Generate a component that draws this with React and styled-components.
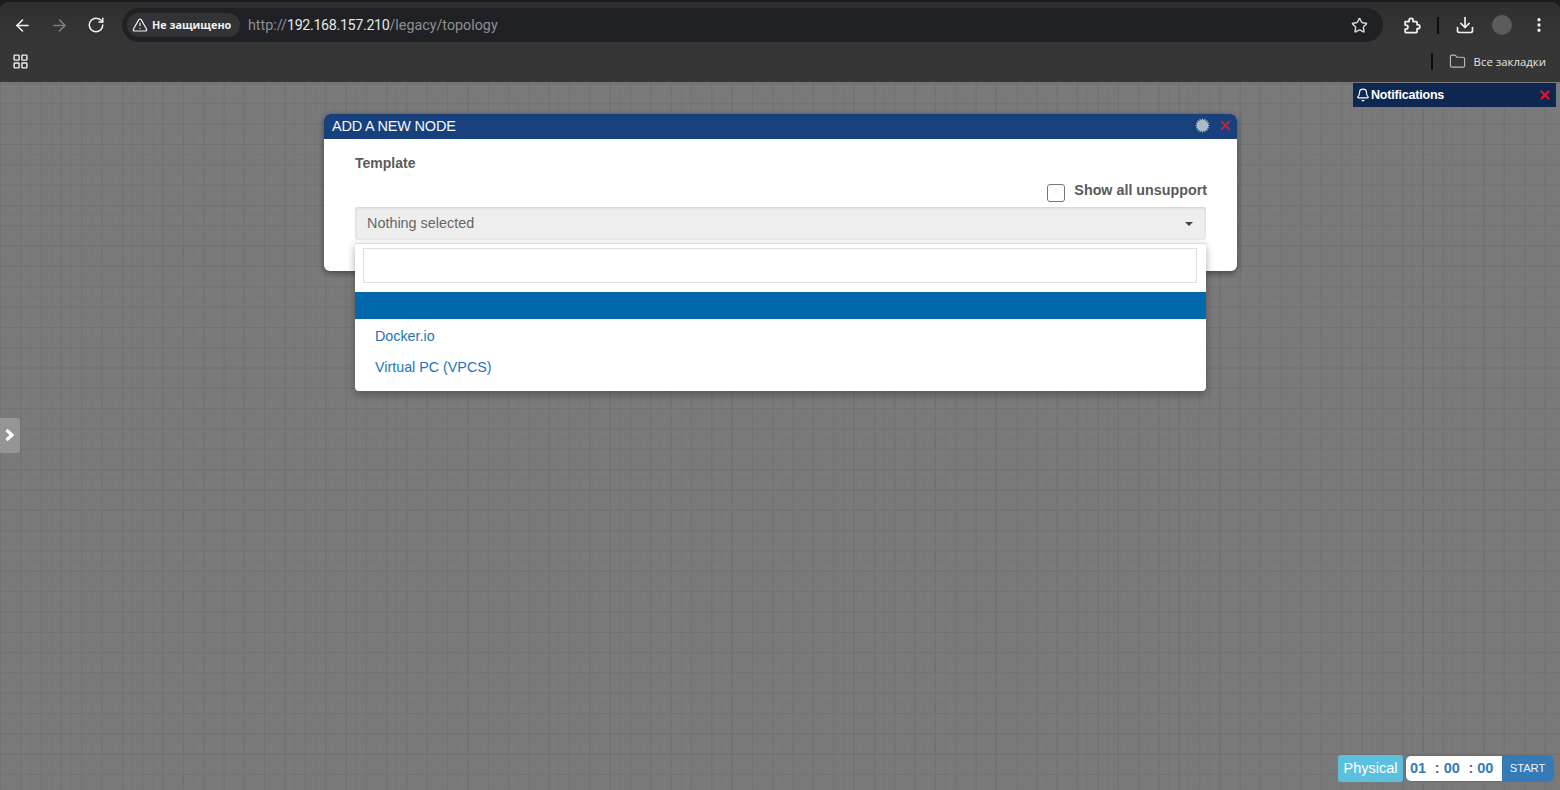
import React from 'react';
import styled, { createGlobalStyle } from 'styled-components';
import { ArrowLeft, ArrowRight, RotateCw, TriangleAlert, Star, Download, EllipsisVertical, LayoutGrid, Folder, Bell, X } from 'lucide-react';

const GlobalStyle = createGlobalStyle`
  html, body { margin: 0; padding: 0; height: 100%; overflow: hidden; }
  body { font-family: "Liberation Sans", Arial, sans-serif; background: #7a7a7a; }
  #root { height: 100%; }
`

const Page = styled.div`
  width: 1560px;
  height: 790px;
  display: flex;
  flex-direction: column;
  overflow: hidden;
  background: #1b1b1b;
`

const TabStrip = styled.div`
  height: 2px;
  background: #1b1b1b;
  flex: none;
`

const Toolbar = styled.div`
  height: 40px;
  flex: none;
  display: flex;
  align-items: center;
  padding: 6px 0 0 13px;
  box-sizing: border-box;
  background: linear-gradient(#2f2f2f, #363636);
  border-radius: 8px 8px 0 0;
  color: #f1f1f1;
`

const NavButton = styled.span`
  width: 19px;
  height: 19px;
  display: flex;
  margin-right: ${p => p.$gap ?? 18}px;
  color: ${p => p.$muted ? '#7d7d7d' : '#f1f1f1'};
`

const Omnibox = styled.div`
  width: 1261px;
  height: 34px;
  margin-left: 16px;
  border-radius: 17px;
  background: #202124;
  display: flex;
  align-items: center;
  padding: 0 15px 0 5px;
  box-sizing: border-box;
`

const SecurityChip = styled.div`
  height: 24px;
  width: 113px;
  flex: none;
  border-radius: 12px;
  background: #323336;
  display: flex;
  align-items: center;
  gap: 4px;
  padding: 0 0 1px 5px;
  box-sizing: border-box;
  font-family: "Open Sans", sans-serif;
  font-size: 10.8px;
  font-weight: 700;
  color: #f1f1f1;
  white-space: nowrap;
`

const Url = styled.div`
  margin-left: 8px;
  flex: 1;
  font-family: Roboto, sans-serif;
  font-size: 14.3px;
  color: #8e8f92;
  b { font-weight: 400; color: #e6e6e6; letter-spacing: -0.35px; }
`

const ToolIcons = styled.div`
  display: flex;
  align-items: center;
  margin-left: 19px;
`

const Divider = styled.span`
  width: 2px;
  height: 17px;
  background: #0c0c0c;
  flex: none;
  margin: ${p => p.$margin};
`

const Avatar = styled.span`
  width: 20px;
  height: 20px;
  border-radius: 50%;
  background: #5c5c5c;
  margin: 0 18px 0 17px;
`

const Bookmarks = styled.div`
  height: 40px;
  flex: none;
  display: flex;
  align-items: center;
  background: #363636;
  padding: 0 14px 2px 12px;
  color: #efefef;
  box-sizing: border-box;
`

const AllBookmarks = styled.span`
  display: flex;
  align-items: center;
  gap: 8px;
  font-family: "Open Sans", sans-serif;
  font-size: 11.4px;
  color: #e4e4e4;
  svg { color: #b9b9b9; }
`

const Spacer = styled.div`
  flex: 1;
`

const Canvas = styled.div`
  position: relative;
  flex: 1;
  background-color: #7a7a7a;
  background-image:
    linear-gradient(#717171 1px, transparent 1px),
    linear-gradient(90deg, #717171 1px, transparent 1px),
    linear-gradient(#767676 1px, transparent 1px),
    linear-gradient(90deg, #767676 1px, transparent 1px);
  background-size: 20.33px 20.33px, 20.33px 20.33px, 10.165px 10.165px, 10.165px 10.165px;
  background-position: 0 1px, 0 1px, 0 1px, 0 1px;
`

const NotificationBar = styled.div`
  position: absolute;
  top: 1px;
  right: 4px;
  width: 203px;
  height: 24px;
  background: #0d2750;
  color: #fff;
  display: flex;
  align-items: center;
  padding: 0 4px 1px 3px;
  box-sizing: border-box;
  font-size: 12.5px;
  letter-spacing: -0.2px;
  font-weight: 700;
  gap: 1px;
`

const Modal = styled.div`
  position: absolute;
  left: 324px;
  top: 32px;
  width: 913px;
  height: 157px;
  background: #fff;
  border-radius: 6px;
  box-shadow: 0 2px 6px rgba(0, 0, 0, 0.45);
  overflow: hidden;
`

const ModalHeader = styled.div`
  height: 25px;
  background: #17407c;
  color: #f4f7fb;
  display: flex;
  align-items: center;
  padding: 0 4px 2px 8px;
  box-sizing: border-box;
  font-size: 14.5px;
  letter-spacing: -0.2px;
`

const HeaderIcon = styled.span`
  display: flex;
  margin-left: ${p => p.$gap}px;
  color: ${p => p.$color};
`

const ModalBody = styled.div`
  padding: 16px 31px 0;
  color: #5a5a5a;
`

const FieldLabel = styled.div`
  font-size: 14px;
  font-weight: 700;
  line-height: 16px;
`

const CheckRow = styled.label`
  display: flex;
  justify-content: flex-end;
  align-items: flex-start;
  gap: 9px;
  margin: 11px -1px 0 0;
  height: 25px;
  font-size: 14.3px;
  font-weight: 700;
  line-height: 16px;
`

const CheckBox = styled.span`
  width: 16px;
  height: 16px;
  margin-top: 2px;
  border: 1px solid #767676;
  border-radius: 3px;
  background: #fff;
`

const SelectButton = styled.div`
  height: 33px;
  background: #eee;
  border-radius: 3px;
  box-shadow: inset 0 1px 3px rgba(0, 0, 0, 0.14);
  display: flex;
  align-items: center;
  justify-content: space-between;
  padding: 0 12px 2px;
  box-sizing: border-box;
  font-size: 14.4px;
  color: #666;
`

const Caret = styled.span`
  width: 0;
  height: 0;
  border-left: 4px solid transparent;
  border-right: 4px solid transparent;
  border-top: 4px solid #444;
  margin: 2px 1px 0 0;
`

const Dropdown = styled.div`
  position: absolute;
  left: 355px;
  top: 161px;
  width: 851px;
  height: 148px;
  background: #fff;
  border-top: 1px solid #ddd;
  border-radius: 0 0 4px 4px;
  box-shadow: 0 3px 8px rgba(0, 0, 0, 0.32);
  box-sizing: border-box;
`

const SearchBox = styled.div`
  height: 35px;
  margin: 4px 9px 9px 8px;
  border: 1px solid #dcdce4;
  background: #fff;
  box-sizing: border-box;
`

const ActiveOption = styled.div`
  height: 27px;
  background: #0168ab;
  margin-bottom: 1px;
`

const Option = styled.div`
  height: 31px;
  padding-left: 20px;
  display: flex;
  align-items: center;
  font-size: 14.3px;
  color: #1d76b7;
`

const SideToggle = styled.div`
  position: absolute;
  left: 0;
  top: 336px;
  width: 20px;
  height: 35px;
  background: #959595;
  border-radius: 0 3px 3px 0;
  display: flex;
  align-items: center;
  padding: 0 0 1px 4px;
  box-sizing: border-box;
  color: #fff;
`

const TimerBar = styled.div`
  position: absolute;
  right: 6px;
  bottom: 8px;
  display: flex;
  align-items: stretch;
  height: 27px;
  gap: 2px;
`

const PhysicalBadge = styled.div`
  width: 65px;
  background: #5bc0de;
  border-radius: 3px;
  color: #fff;
  font-size: 14.5px;
  display: flex;
  align-items: center;
  justify-content: center;
  padding-bottom: 1px;
  box-sizing: border-box;
`

const Timer = styled.div`
  display: flex;
  width: 149px;
  border-radius: 6px;
  overflow: hidden;
  border: 1px solid #337ab7;
  box-sizing: border-box;
`

const TimeFields = styled.div`
  width: 96px;
  background: #fff;
  display: flex;
  align-items: center;
  padding: 0 0 1px 4px;
  box-sizing: border-box;
  font-size: 14.5px;
  font-weight: 700;
  color: #337ab7;
`

const Colon = styled.span`
  color: #666;
  width: 17.5px;
  text-align: right;
  padding-right: 4px;
  box-sizing: border-box;
`

const StartButton = styled.div`
  flex: 1;
  background: #337ab7;
  color: #f2f2f2;
  font-size: 11.2px;
  display: flex;
  align-items: center;
  justify-content: center;
  padding-bottom: 1px;
`

const nodes = ['Docker.io', 'Virtual PC (VPCS)']

const gearPoints = Array.from({ length: 32 }, (_, i) => {
  const r = i % 2 ? 5.8 : 8
  const a = (i * Math.PI) / 16
  return `${(8 + r * Math.sin(a)).toFixed(2)},${(8 - r * Math.cos(a)).toFixed(2)}`
}).join(' ')

const Gear = () => (
  <svg width="15" height="15" viewBox="0 0 16 16">
    <polygon fill="#a9bcc6" points={gearPoints} />
  </svg>
)

const ExtensionIcon = () => (
  <svg width="19" height="19" viewBox="0 0 24 24" fill="none" stroke="currentColor" strokeWidth="2.2" strokeLinejoin="round">
    <path d="M4 7 H9 V5.5 a2.5 2.5 0 0 1 5 0 V7 H18 a1 1 0 0 1 1 1 V11 h1 a2.5 2.5 0 0 1 0 5 h-1 v4 a1 1 0 0 1-1 1 H5 a1 1 0 0 1-1-1 V16.5 h1 a2.5 2.5 0 0 0 0-5 H4 Z" />
  </svg>
)

export default function App() {
  return (
    <Page>
      <GlobalStyle />
      <TabStrip />
      <Toolbar>
        <NavButton><ArrowLeft size={19} strokeWidth={2} /></NavButton>
        <NavButton $muted><ArrowRight size={19} strokeWidth={2} /></NavButton>
        <NavButton $gap={0}><RotateCw size={18} strokeWidth={2} /></NavButton>
        <Omnibox>
          <SecurityChip>
            <TriangleAlert size={16} strokeWidth={1.8} />
            Не защищено
          </SecurityChip>
          <Url>http://<b>192.168.157.210</b>/legacy/topology</Url>
          <Star size={17} strokeWidth={2} color="#d8d8d8" />
        </Omnibox>
        <ToolIcons>
          <ExtensionIcon />
          <Divider $margin="0 16px" />
          <Download size={20} strokeWidth={2} />
          <Avatar />
          <EllipsisVertical size={18} strokeWidth={2.4} />
        </ToolIcons>
      </Toolbar>
      <Bookmarks>
        <LayoutGrid size={17} strokeWidth={2} />
        <Spacer />
        <Divider $margin="0 16px 0 0" />
        <AllBookmarks>
          <Folder size={17} strokeWidth={1.6} />
          Все закладки
        </AllBookmarks>
      </Bookmarks>
      <Canvas>
        <NotificationBar>
          <Bell size={14} strokeWidth={2} />
          Notifications
          <Spacer />
          <X size={14} strokeWidth={4} color="#e8112d" />
        </NotificationBar>
        <Modal>
          <ModalHeader>
            ADD A NEW NODE
            <Spacer />
            <HeaderIcon $gap={0}><Gear /></HeaderIcon>
            <HeaderIcon $gap={8} $color="#c4223f"><X size={15} strokeWidth={3.5} /></HeaderIcon>
          </ModalHeader>
          <ModalBody>
            <FieldLabel>Template</FieldLabel>
            <CheckRow>
              <CheckBox />
              Show all unsupport
            </CheckRow>
            <SelectButton>
              Nothing selected
              <Caret />
            </SelectButton>
          </ModalBody>
        </Modal>
        <Dropdown>
          <SearchBox />
          <ActiveOption />
          {nodes.map(name => <Option key={name}>{name}</Option>)}
        </Dropdown>
        <SideToggle>
          <svg width="12" height="14" viewBox="0 0 12 14">
            <path d="M2.5 2 L8 7 L2.5 12" fill="none" stroke="#fff" strokeWidth="3.2" />
          </svg>
        </SideToggle>
        <TimerBar>
          <PhysicalBadge>Physical</PhysicalBadge>
          <Timer>
            <TimeFields>
              01<Colon>&nbsp;:</Colon>00<Colon>&nbsp;:</Colon>00
            </TimeFields>
            <StartButton>START</StartButton>
          </Timer>
        </TimerBar>
      </Canvas>
    </Page>
  );
}
